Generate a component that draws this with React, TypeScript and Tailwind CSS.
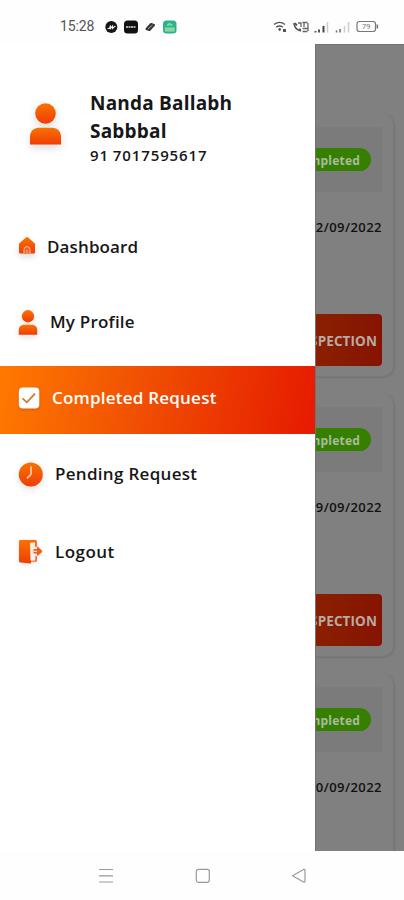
import React from 'react';

type MenuItem = {
    label: string;
    icon: React.ReactNode;
    row: string;
    text: string;
}

const Gradients = () => (
    <svg className="absolute w-0 h-0" aria-hidden="true">
        <defs>
            <linearGradient id="flame" x1="0" y1="0" x2="0" y2="1">
                <stop offset="0" stopColor="#fb7200" />
                <stop offset="1" stopColor="#ee3d05" />
            </linearGradient>
        </defs>
    </svg>
);

const UserIcon = ({ className }: { className: string }) => (
    <svg viewBox="0 0 32 42" className={className} fill="url(#flame)">
        <circle cx="16" cy="10.5" r="10.3" />
        <path d="M.5 41.5V34c0-5.500 3.500-9.300 9-9.300h13c5.500 0 9 3.800 9 9.300v7.500z" />
    </svg>
);

const HomeIcon = () => (
    <svg viewBox="0 0 18 18" className="w-[18px] h-[18px] mb-[3px] drop-shadow-[0_3px_3px_rgba(0,0,0,0.15)]">
        <path d="M7.600 .8a2 2 0 0 1 2.800 0L16.300 6c.5.500.7.900.7 1.500V15c0 1-.6 1.600-1.600 1.600H2.600C1.600 16.600 1 16 1 15V7.500C1 6.900 1.200 6.500 1.700 6z" fill="url(#flame)" />
        <path d="M6 16.600v-4a3 3 0 0 1 6 0v4" fill="#f0622c" stroke="#ffc0a0" strokeWidth="1" />
        <path d="M9 13v3.600" stroke="#ffb08a" strokeWidth="1" />
    </svg>
);

const CheckIcon = () => (
    <svg viewBox="0 0 22 22" className="w-[22px] h-[22px] drop-shadow-[0_1px_1px_rgba(120,30,0,0.3)]">
        <rect x=".8" y=".5" width="20.500" height="21" rx="4" fill="#fff" />
        <path d="M4.500 11.300l4.300 4 8.300-8.600" fill="none" stroke="#cf7638" strokeWidth="1.700" />
    </svg>
);

const ClockIcon = () => (
    <svg viewBox="0 0 25 25" className="w-[25px] h-[25px] drop-shadow-[0_2px_3px_rgba(0,0,0,0.14)]">
        <circle cx="12.800" cy="12.500" r="12" fill="url(#flame)" />
        <path d="M13 4.500v7.800l-4 4" fill="none" stroke="#ffc7a2" strokeWidth="1.800" />
    </svg>
);

const LogoutIcon = () => (
    <svg viewBox="0 0 25 25" className="w-[25px] h-[25px] mb-[2px] drop-shadow-[0_1px_2px_rgba(0,0,0,0.12)]">
        <path d="M1 2.500C1 1.500 1.600 1 2.600 1H18.500v2.500H13v21L2.500 23.500C1.500 23.400 1 22.800 1 21.800z" fill="url(#flame)" />
        <path d="M17 3v4.500l2 .5V2.500zM13 22.800h4.500c1 0 1.500-.5 1.500-1.500v-4h-1.800v4H13z" fill="#f0703a" />
        <path d="M12 4h5v17.500h-4.500z" fill="#fff1e8" />
        <path d="M15.500 10h3.500V8.600c0-.8.700-1 1.200-.5l3.800 3.700c.4.400.4.700 0 1.100l-3.800 3.700c-.5.500-1.200.3-1.200-.5v-1.600h-3.500z" fill="#f25d1a" />
        <path d="M14 12.400h5M16 5.500v3.500" stroke="#ffd8c2" strokeWidth="1.300" />
    </svg>
);

const menu: MenuItem[] = [
    { label: 'Dashboard', icon: <HomeIcon />, row: 'h-[74px] pl-[18px] gap-[11px]', text: 'tracking-[0.12px]' },
    { label: 'My Profile', icon: <UserIcon className="w-[20px] h-[25px] drop-shadow-[0_2px_3px_rgba(0,0,0,0.13)]" />, row: 'h-[76px] pl-[18px] gap-3', text: 'tracking-[0.2px]' },
    { label: 'Completed Request', icon: <CheckIcon />, row: 'h-[68px] mt-[6px] mb-[5px] pb-[4px] pl-[18px] gap-3 bg-linear-[100deg,#ff7a00,#f15202_42%,#e61a00] text-white', text: 'tracking-[0.22px]' },
    { label: 'Pending Request', icon: <ClockIcon />, row: 'h-[70px] pl-[18px] gap-3', text: 'tracking-[0.3px]' },
    { label: 'Logout', icon: <LogoutIcon />, row: 'h-[86px] pl-[18px] gap-3', text: 'tracking-[0.45px]' }
];

const dates = ['12/09/2022', '09/09/2022', '10/09/2022'];

const StatusBar = () => (
    <div className="h-11 shrink-0 flex items-center justify-between pl-[60px] pr-[25px] pt-[9px] text-[#555]">
        <div className="flex items-center">
            <span className="w-[35px] font-['Roboto',sans-serif] text-[14px] tracking-[-0.1px]">15:28</span>
            <svg viewBox="0 0 74 14" className="w-[74px] h-[14px] ml-[9px]">
                <circle cx="7.300" cy="7" r="6" fill="#151515" />
                <path d="M3.500 8.500h2l1-3v3l2-2.500v2.500l2-2h1" fill="none" stroke="#eee" strokeWidth="1.100" />
                <rect x="20" y="0.500" width="14" height="13" rx="3.500" fill="#111" />
                <path d="M22 7h10" stroke="#aaa" strokeWidth="2" strokeDasharray="2 .5" />
                <path d="M42.500 9l4.500-5 3 1-4.500 5z" fill="#333" stroke="#333" strokeWidth="2" strokeLinejoin="round" />
                <path d="M44 9l4.500-4" stroke="#ccc" strokeWidth=".8" />
                <rect x="59" y="0.500" width="13.500" height="13" rx="3.500" fill="#28b58b" />
                <path d="M61.500 8h8.500v3h-8.500zM63 5.500l2.500-2 3 2" fill="#80d5b4" stroke="#a0d49b" strokeWidth="1.200" />
            </svg>
        </div>
        <svg viewBox="0 0 106 14" className="w-[106px] h-[14px]" fill="none">
            <path d="M1 4.500q5.500-4.200 11 0M3.200 7.300q3.300-2.500 6.600 0" stroke="#555" strokeWidth="1.400" />
            <path d="M5 9.300l1.700-1.500 1.700 1.500-1.700 2zM10 9h3v3h-3z" fill="#555" />
            <path d="M21 3q.5 6.500 7 8M22 3l2 2.500M26 9l2 1" stroke="#555" strokeWidth="1.700" />
            <path d="M25 3h3v4M29.500 2.500h5M31 2.500V7M29.500 8.500h5M29.500 11.500h5M35 3v8" stroke="#666" strokeWidth="1.300" />
            <path d="M42.500 11v1.500M46 9.500v3" stroke="#555" strokeWidth="2" />
            <path d="M50.500 6v6.500" stroke="#444" strokeWidth="2" />
            <path d="M54.500 2v10.500" stroke="#ccc" strokeWidth="1.500" />
            <path d="M63.500 10.500v2M67 9v3.500" stroke="#666" strokeWidth="1.500" />
            <path d="M71.500 6v6.500M75.500 2v10.500" stroke="#ccc" strokeWidth="1.500" />
            <rect x="84" y="1.500" width="18.500" height="10" rx="2.500" stroke="#777" strokeWidth="1.200" />
            <path d="M104.300 4.500v4" stroke="#777" strokeWidth="1.600" />
            <text x="93.200" y="9.300" textAnchor="middle" fontSize="7.500" fontFamily="Roboto, sans-serif" fill="#777">79</text>
        </svg>
    </div>
);

const Drawer = () => (
    <div className="w-[315px] shrink-0 bg-white">
        <div className="flex h-[166px] pl-[29px] pt-[45px]">
            <UserIcon className="w-[33px] h-[42px] mt-[14px] shrink-0 drop-shadow-[0_3px_4px_rgba(0,0,0,0.15)]" />
            <div className="ml-7 w-[180px]">
                <h1 className="text-[19px] leading-[28px] font-bold whitespace-nowrap tracking-[0.2px]">Nanda Ballabh<br />Sabbbal</h1>
                <p className="text-[15px] leading-[20px] font-semibold tracking-[0.9px] [word-spacing:-1px]">91 7017595617</p>
            </div>
        </div>
        <nav>
            {menu.map((item) => (
                <div key={item.label} className={`flex items-center ${item.row}`}>
                    {item.icon}
                    <span className={`text-[17px] leading-6 font-semibold whitespace-nowrap ${item.text}`}>{item.label}</span>
                </div>
            ))}
        </nav>
    </div>
);

const RequestCard = ({ date }: { date: string }) => (
    <div className="h-[264px] shrink-0 mr-[10px] pr-[11px] pt-[14px] flex flex-col items-end border-r border-b border-[#797979] rounded-r-[12px] shadow-[1px_1px_2px_rgba(0,0,0,0.1)]">
        <div className="w-full h-[65px] flex items-center justify-end pr-[11px] bg-[#7b7b7b]">
            <span className="h-[23px] w-[90px] shrink-0 flex items-center justify-end pr-[11px] pt-[2px] rounded-full bg-[#358000] text-[#aaba9e] text-[12px] font-bold tracking-[0.2px]">Completed</span>
        </div>
        <span className="mt-[25px] text-[13px] leading-5 font-semibold text-[#111] whitespace-nowrap tracking-[0.45px]">{date}</span>
        <div className="mt-[77px] h-[52px] w-[110px] shrink-0 flex items-center justify-end pr-[5px] pt-[2px] rounded-[4px] bg-linear-to-r from-[#8b2600] to-[#861300] text-[#b7a9a3] text-[13.5px] font-bold tracking-[0.1px]">INSPECTION</div>
    </div>
);

const NavBar = () => (
    <div className="h-[49px] shrink-0 flex items-center justify-between pl-[98px] pr-[97px]">
        <svg viewBox="0 0 16 16" className="w-4 h-4" stroke="#999" strokeWidth="1.200">
            <path d="M1 1.500h14M1 7.800h14M1 14h14" />
        </svg>
        <svg viewBox="0 0 16 16" className="w-4 h-4" fill="none" stroke="#999" strokeWidth="1.200">
            <rect x="1.300" y="1.300" width="13" height="13" rx="2.200" />
        </svg>
        <svg viewBox="0 0 16 16" className="w-4 h-4" fill="none" stroke="#999" strokeWidth="1.200" strokeLinejoin="round">
            <path d="M1.500 7.800l11-6.200c.9-.5 1.500-.1 1.500.7v11c0 .8-.6 1.200-1.500.7z" />
        </svg>
    </div>
);

const App = () => {
    return (
        <div className="w-[404px] h-[900px] flex flex-col overflow-hidden bg-[#fefefe] text-[#171717] font-['Open_Sans','Noto_Sans',sans-serif]">
            <Gradients />
            <StatusBar />
            <div className="h-[807px] shrink-0 flex overflow-hidden">
                <Drawer />
                <div className="flex-1 min-w-0 flex flex-col gap-4 pt-[68px] overflow-hidden bg-[#808080] border-t border-l border-[#727272]">
                    {dates.map((date) => (
                        <RequestCard key={date} date={date} />
                    ))}
                </div>
            </div>
            <NavBar />
        </div>
    );
};

export default App;
